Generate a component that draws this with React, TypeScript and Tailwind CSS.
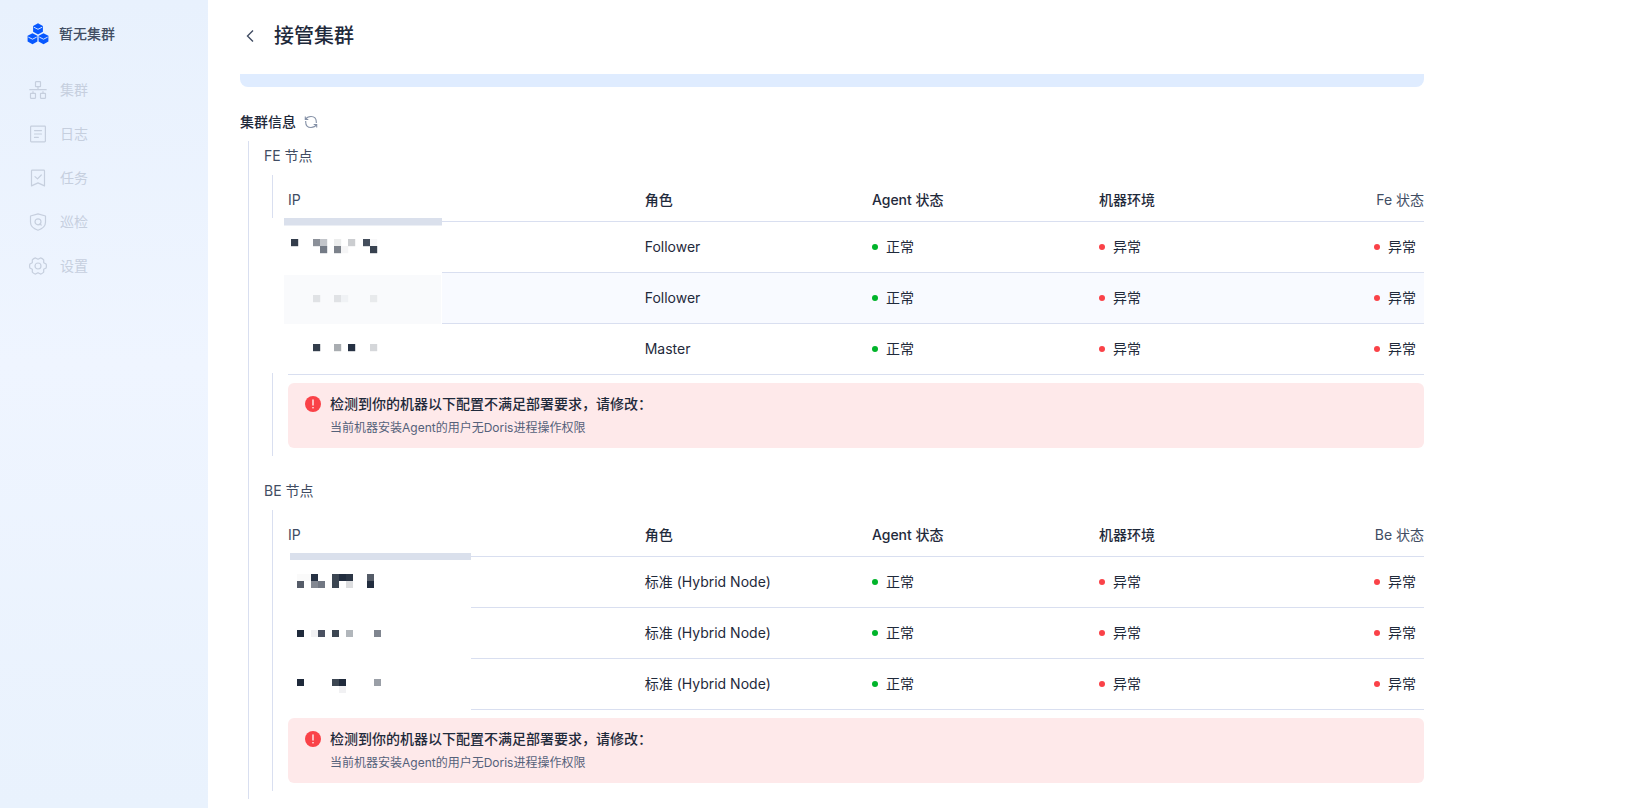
import { type ReactNode } from "react";

type Cell = [x: number, y: number, color: string];

interface NodeRow {
  role: string;
  active?: boolean;
}

const FE_ROWS: NodeRow[] = [
  { role: "Follower" },
  { role: "Follower", active: true },
  { role: "Master" },
];

const BE_ROWS: NodeRow[] = [
  { role: "标准 (Hybrid Node)" },
  { role: "标准 (Hybrid Node)" },
  { role: "标准 (Hybrid Node)" },
];

// masked IP blocks
const FE_CELLS: Cell[] = [
  [26, 21, "#333d4b"],
  [48, 21, "#8b9099"],
  [55, 21, "#c2c5ca"],
  [69, 21, "#eceded"],
  [83, 21, "#cbcdd0"],
  [98, 21, "#444e5c"],
  [105, 21, "#f7f7f8"],
  [55, 28, "#747b86"],
  [69, 28, "#7c828b"],
  [76, 28, "#f5f5f6"],
  [105, 28, "#37414f"],
  [48, 77, "#e0e2e5"],
  [69, 77, "#e0e2e5"],
  [76, 77, "#f0f2f5"],
  [105, 77, "#e8eaec"],
  [48, 126, "#333d4b"],
  [69, 126, "#a9adb1"],
  [83, 126, "#263143"],
  [105, 126, "#d5d7da"],
];

const BE_CELLS: Cell[] = [
  [23, 22, "#fafafa"],
  [30, 22, "#fafafa"],
  [37, 22, "#263143"],
  [58, 22, "#3c4652"],
  [65, 22, "#222d3f"],
  [72, 22, "#2c3646"],
  [93, 22, "#555c68"],
  [23, 29, "#555c68"],
  [37, 29, "#838892"],
  [44, 29, "#727883"],
  [58, 29, "#3c4652"],
  [72, 29, "#dcdddf"],
  [93, 29, "#222d3f"],
  [23, 78, "#1f2a3b"],
  [37, 78, "#f1f1f3"],
  [44, 78, "#4a5161"],
  [58, 78, "#3c4652"],
  [72, 78, "#b1b6bb"],
  [100, 78, "#7f858f"],
  [23, 127, "#1f2a3b"],
  [58, 127, "#3c4652"],
  [65, 127, "#1f2a3b"],
  [100, 127, "#9a9fa7"],
  [65, 134, "#f1f1f3"],
];

function FeMask() {
  return (
    <svg
      className="absolute top-[43px] -left-2 h-[155px] w-[177px]"
      viewBox="0 0 177 155"
      aria-hidden="true"
    >
      <rect width="177" height="155" fill="#fff" />
      <rect x="19" y="0" width="158" height="7.500" fill="#dae0ec" />
      <rect x="19" y="57" width="157" height="49" fill="#f9fafc" />
      {FE_CELLS.map(([x, y, color]) => (
        <rect key={`${x}-${y}`} x={x} y={y} width="7.200" height="7.200" fill={color} />
      ))}
    </svg>
  );
}

function BeMask() {
  return (
    <svg
      className="absolute top-[42px] left-px h-[160px] w-[197px]"
      viewBox="0 0 197 160"
      aria-hidden="true"
    >
      <rect width="197" height="160" fill="#fff" />
      <rect x="16" y="1" width="181" height="7" fill="#dae0ec" />
      {BE_CELLS.map(([x, y, color]) => (
        <rect key={`${x}-${y}`} x={x} y={y} width="7" height="7" fill={color} />
      ))}
    </svg>
  );
}

function Logo() {
  const cube = (x: number, y: number) => (
    <g transform={`translate(${x} ${y})`}>
      <path d="M5.500 0 10.400 2.600v5.800L5.500 11.100.6 8.400V2.600z" fill="#0758ff" />
      <path d="M1.300 3.900 5.500 6l4.200-2.100" fill="none" stroke="#e8f1fd" strokeWidth=".9" />
    </g>
  );
  return (
    <svg className="h-[22px] w-[22px]" viewBox="0 0 22 22" aria-hidden="true">
      {cube(5.5, 0.3)}
      {cube(0, 10.2)}
      {cube(11, 10.2)}
    </svg>
  );
}

function NavIcon({ children }: { children: ReactNode }) {
  return (
    <svg
      className="h-[18px] w-[18px]"
      viewBox="0 0 18 18"
      fill="none"
      stroke="currentColor"
      strokeWidth="1.200"
      strokeLinecap="round"
      strokeLinejoin="round"
      aria-hidden="true"
    >
      {children}
    </svg>
  );
}

const NAV = [
  {
    label: "集群",
    icon: (
      <>
        <rect x="6.500" y=".7" width="5" height="5" rx=".5" />
        <rect x="1.500" y="12.300" width="5" height="5" rx=".5" />
        <rect x="11.500" y="12.300" width="5" height="5" rx=".5" />
        <path d="M9 5.700v3M.8 8.700h16.400M4 10.700v1.600M14 10.700v1.600" />
      </>
    ),
  },
  {
    label: "日志",
    icon: (
      <>
        <rect x="1.600" y="1.100" width="14.800" height="15.800" rx=".8" />
        <path d="M5.500 5.600h7M5.500 9h7M5.500 12.400h3.800" />
      </>
    ),
  },
  {
    label: "任务",
    icon: (
      <>
        <path d="M2.500 1.900c0-.5.3-.8.800-.8h11.400c.5 0 .8.3.8.800v15L9 13.900l-6.500 3z" />
        <path d="m6 7.600 2.500 2.300L12.300 6" />
      </>
    ),
  },
  {
    label: "巡检",
    icon: (
      <>
        <path d="M9 .8 16.500 3v6.200c0 3.600-3 6.500-7.500 8-4.500-1.500-7.500-4.400-7.500-8V3z" />
        <circle cx="9" cy="8.800" r="3" />
        <path d="m11 11 1.200 1" />
      </>
    ),
  },
  {
    label: "设置",
    icon: (
      <>
        <path d="M9 2.300 11.500.9q1.900.5 3.200 2v2.800L17.100 7q.6 2 0 4l-2.400 1.300v2.800q-1.300 1.500-3.200 2L9 15.700l-2.500 1.400q-1.900-.5-3.200-2v-2.800L.9 11q-.6-2 0-4l2.400-1.300V2.900q1.300-1.500 3.200-2z" />
        <circle cx="9" cy="9" r="3" />
      </>
    ),
  },
];

function Sidebar() {
  return (
    <aside className="w-52 shrink-0 bg-linear-to-b from-[#e8f1fd] via-[#eff5ff] via-45% to-[#e9f2fd]">
      <div className="flex h-[68px] items-center gap-2.5 pl-[27px] text-sm font-medium text-[#414d63]">
        <Logo />
        暂无集群
      </div>
      <nav>
        {NAV.map(({ label, icon }) => (
          <button
            key={label}
            type="button"
            disabled
            className="flex h-11 w-full items-center gap-[13px] pl-[29px] text-sm text-[#c6cfde]"
          >
            <NavIcon>{icon}</NavIcon>
            {label}
          </button>
        ))}
      </nav>
    </aside>
  );
}

function Status({ ok = false }: { ok?: boolean }) {
  return (
    <span className="flex items-center gap-2 whitespace-nowrap">
      <span className={`h-1.5 w-1.5 rounded-full ${ok ? "bg-[#00b42a]" : "bg-[#fa4248]"}`} />
      {ok ? "正常" : "异常"}
    </span>
  );
}

function Alert() {
  return (
    <div role="alert" className="mt-2 flex gap-2 rounded-md bg-[#fee9ea] px-4 pt-2.5 pb-2">
      <svg className="mt-0.5 h-[18px] w-[18px] shrink-0" viewBox="0 0 18 18" aria-hidden="true">
        <circle cx="9" cy="9" r="8" fill="#fa4248" />
        <path d="M9 5v5" stroke="#fff" strokeWidth="1.300" strokeLinecap="round" />
        <circle cx="9" cy="12.700" r=".8" fill="#fff" />
      </svg>
      <div>
        <p className="text-sm leading-[22px] font-medium text-[#1f2a3b]">
          检测到你的机器以下配置不满足部署要求，请修改：
        </p>
        <p className="mt-px text-xs leading-6 text-[#55617a]">
          当前机器安装Agent的用户无Doris进程操作权限
        </p>
      </div>
    </div>
  );
}

function NodeSection({
  title,
  statusLabel,
  rows,
  mask,
}: {
  title: string;
  statusLabel: string;
  rows: NodeRow[];
  mask: ReactNode;
}) {
  return (
    <section>
      <h3 className="text-sm leading-[22px] text-[#414d63]">{title}</h3>
      <div className="relative mt-2 ml-2 border-l border-[#d9dff0] pt-1 pb-2 pl-[15px]">
        <table className="w-full table-fixed border-separate border-spacing-0 text-left text-sm text-[#1f2a3b] [&_td]:border-b [&_td]:border-[#d9dff0] [&_th]:border-b [&_th]:border-[#d9dff0]">
          <colgroup>
            <col className="w-[31.4%]" />
            <col className="w-1/5" />
            <col className="w-1/5" />
            <col />
            <col className="w-[52px]" />
          </colgroup>
          <thead>
            <tr className="h-[43px]">
              <th className="font-normal text-[#414d63]">IP</th>
              <th className="font-medium">角色</th>
              <th className="font-medium">Agent 状态</th>
              <th className="font-medium">机器环境</th>
              <th className="text-right font-normal whitespace-nowrap text-[#414d63]">
                {statusLabel}
              </th>
            </tr>
          </thead>
          <tbody>
            {rows.map((row, i) => (
              <tr key={i} className={`h-[51px] ${row.active ? "bg-[#f8faff]" : ""}`}>
                <td />
                <td>{row.role}</td>
                <td>
                  <Status ok />
                </td>
                <td>
                  <Status />
                </td>
                <td className="pl-0.5">
                  <Status />
                </td>
              </tr>
            ))}
          </tbody>
        </table>
        {mask}
        <Alert />
      </div>
    </section>
  );
}

export default function App() {
  return (
    <div className="flex min-h-screen bg-white font-[Inter,'Noto_Sans_CJK_SC',sans-serif]">
      <Sidebar />
      <main className="min-w-0 flex-1 px-8">
        <header className="flex items-center gap-3.5 pt-[21px] pb-[23px]">
          <button type="button" aria-label="返回" className="text-[#414d63]">
            <svg className="h-5 w-5" viewBox="0 0 20 20" fill="none" aria-hidden="true">
              <path d="m13 4.500-5.500 5.500 5.500 5.500" stroke="currentColor" strokeWidth="1.400" />
            </svg>
          </button>
          <h1 className="text-xl leading-[30px] font-medium text-[#1f2a3b]">接管集群</h1>
        </header>
        <div className="max-w-[1184px]">
          <div className="h-[13px] rounded-b-lg bg-[#dfecff]" />
          <div className="mt-6 flex items-center gap-2">
            <h2 className="text-sm leading-[22px] font-medium text-[#1f2a3b]">集群信息</h2>
            <button type="button" aria-label="刷新" className="text-[#8490a6]">
              <svg
                className="h-3.5 w-3.5"
                viewBox="0 0 14 14"
                fill="none"
                stroke="currentColor"
                strokeWidth="1.100"
                aria-hidden="true"
              >
                <path d="M1.500 4.500C3 1.800 5 1.500 7 1.500c3.500 0 5.300 2 5.300 5.500v1M12.500 9.500C11 12.200 9 12.500 7 12.500c-3.500 0-5.300-2-5.300-5.500V6M1.300 1.500v3h3M12.700 12.500v-3h-3" />
              </svg>
            </button>
          </div>
          <div className="mt-2 ml-2 flex flex-col gap-6 border-l border-[#d9dff0] pt-1 pb-2 pl-[15px]">
            <NodeSection title="FE 节点" statusLabel="Fe 状态" rows={FE_ROWS} mask={<FeMask />} />
            <NodeSection title="BE 节点" statusLabel="Be 状态" rows={BE_ROWS} mask={<BeMask />} />
          </div>
        </div>
      </main>
    </div>
  );
}
